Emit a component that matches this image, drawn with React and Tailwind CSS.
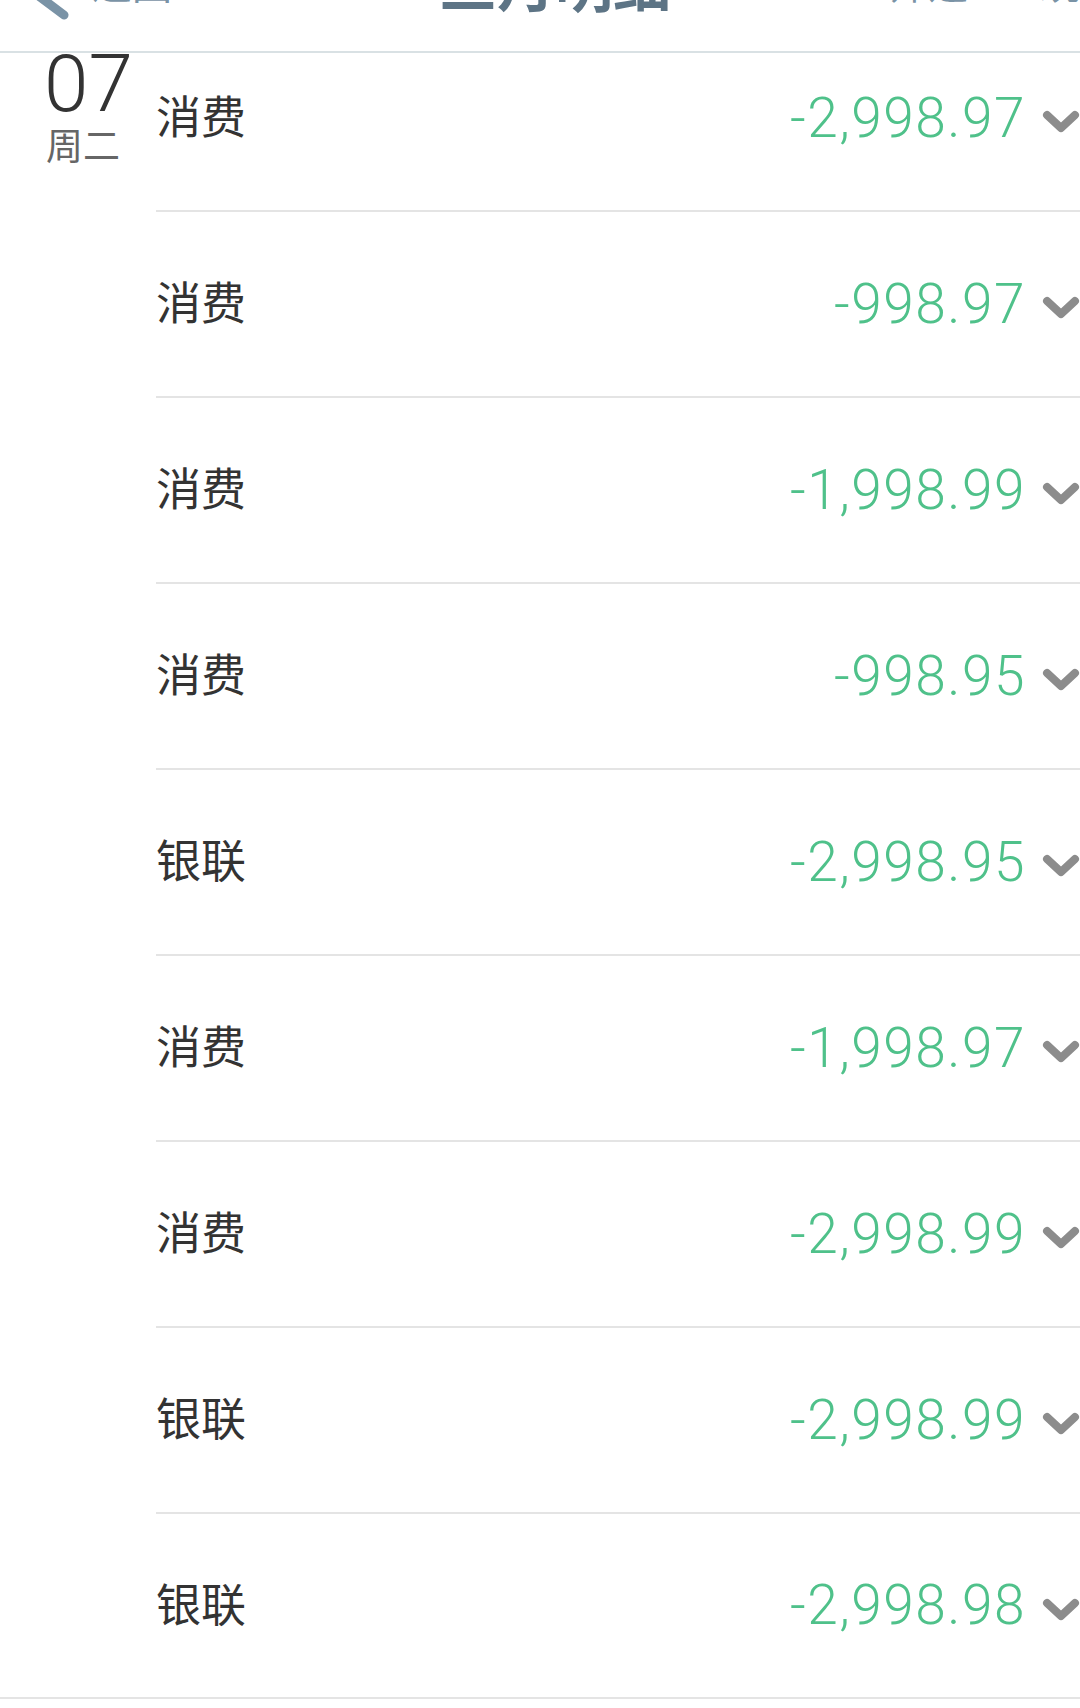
import React from "react";

const records = [
  { id: 1, title: "消费", amount: "-2,998.97" },
  { id: 2, title: "消费", amount: "-998.97" },
  { id: 3, title: "消费", amount: "-1,998.99" },
  { id: 4, title: "消费", amount: "-998.95" },
  { id: 5, title: "银联", amount: "-2,998.95" },
  { id: 6, title: "消费", amount: "-1,998.97" },
  { id: 7, title: "消费", amount: "-2,998.99" },
  { id: 8, title: "银联", amount: "-2,998.99" },
  { id: 9, title: "银联", amount: "-2,998.98" },
];

const cjk = "font-['Noto_Sans_CJK_SC','Noto_Sans',sans-serif]";
const num = "font-['Roboto','Noto_Sans_CJK_SC',sans-serif]";

const ChevronDown = () => (
  <svg width="38" height="24" viewBox="0 0 38 24" className="shrink-0">
    <polyline
      points="5,5 19,18 33,5"
      fill="none"
      stroke="#8c8c8c"
      strokeWidth="8"
      strokeLinecap="round"
      strokeLinejoin="round"
    />
  </svg>
);

const ChevronLeft = () => (
  <svg width="60" height="70" viewBox="0 0 60 70" className="shrink-0">
    <polyline
      points="52,5 12,35 52,65"
      fill="none"
      stroke="#7a93a6"
      strokeWidth="9"
      strokeLinecap="round"
      strokeLinejoin="round"
    />
  </svg>
);

const App = () => {
  return (
    <div className="w-[1080px] h-[1708px] bg-white overflow-hidden">
      {/* header, mostly scrolled off the top */}
      <div className="relative z-10 h-[53px] bg-white border-b-2 border-[#d9e1e4] overflow-hidden">
        <div className="flex items-center h-[64px] -mt-[50px] pl-[12px]">
          <div className="flex items-center w-[300px] mt-[6px]">
            <ChevronLeft />
            <span className={`${cjk} text-[40px] leading-none text-[#7a93a6] ml-[20px] -mt-[6px]`}>
              返回
            </span>
          </div>
          <div className="flex-1 flex justify-center pr-[22px]">
            <span className={`${cjk} text-[58px] leading-none font-bold text-[#5d7485]`}>
              三月明细
            </span>
          </div>
          <div className="flex items-center justify-end w-[300px] gap-[72px] -mr-[40px]">
            <span className={`${cjk} text-[40px] leading-none text-[#7a93a6]`}>
              筛选
            </span>
            <span className={`${cjk} text-[40px] leading-none text-[#7a93a6]`}>
              统计
            </span>
          </div>
        </div>
      </div>

      {/* day group */}
      <div className="-mt-[27px] flex border-b-2 border-[#e4e4e4]">
        <div className="w-[156px] shrink-0 pl-[44px] pt-[18px]">
          <div className={`${num} text-[80px] leading-none font-light text-[#333333]`}>
            07
          </div>
          <div className={`${cjk} text-[37px] leading-none text-[#666666] mt-[2px] ml-[2px]`}>
            周二
          </div>
        </div>
        <div className="flex-1 min-w-0">
          {records.map((item, i) => (
            <div
              key={item.id}
              className={`flex items-center justify-between ${
                i === records.length - 1
                  ? "h-[183px]"
                  : "h-[186px] border-b-2 border-[#e4e4e4]"
              }`}
            >
              <span className={`${cjk} text-[45px] leading-none text-[#333333] mb-[7px]`}>
                {item.title}
              </span>
              <div className="flex items-center">
                <span
                  className={`${num} text-[55px] leading-none font-light tracking-[1.5px] text-[#4fc18a]`}
                >
                  {item.amount}
                </span>
                <div className="ml-[16px] mt-[8px]">
                  <ChevronDown />
                </div>
              </div>
            </div>
          ))}
        </div>
      </div>
    </div>
  );
};

export default App;
